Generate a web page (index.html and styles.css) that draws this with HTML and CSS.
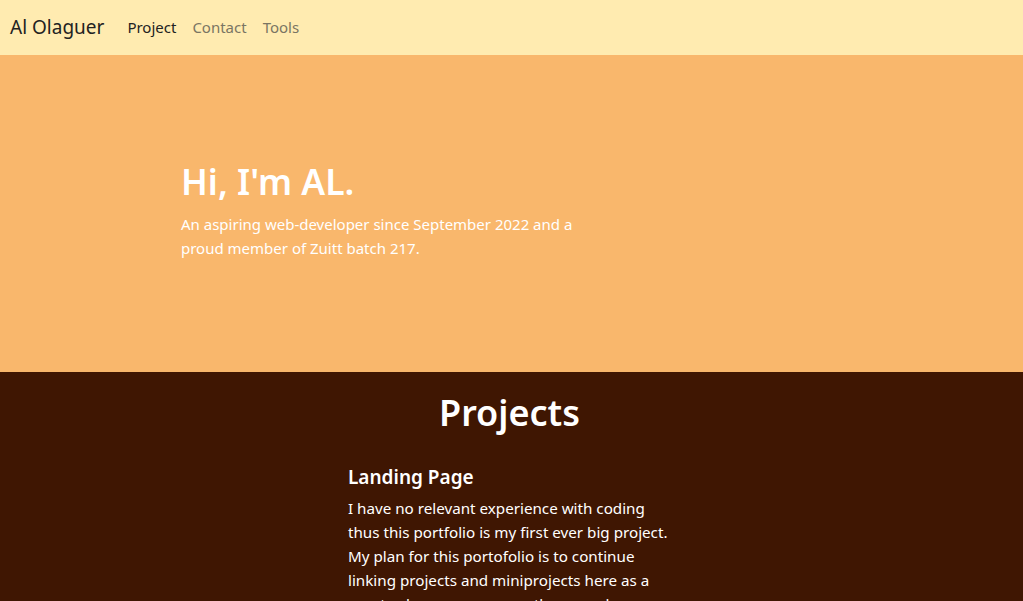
FILE: index.html
```html
<!DOCTYPE html>
<html lang="en">
<head>
<meta charset="utf-8">
<title>Al Olaguer</title>
<link rel="stylesheet" href="styles.css">
</head>
<body>
<nav class="navbar">
  <a class="brand" href="#">Al Olaguer</a>
  <ul class="nav-links">
    <li><a class="nav-link active" href="#">Project</a></li>
    <li><a class="nav-link" href="#">Contact</a></li>
    <li><a class="nav-link" href="#">Tools</a></li>
  </ul>
</nav>
<header class="hero">
  <div class="hero-text">
    <h1 class="hero-title">Hi, I'm AL.</h1>
    <p class="hero-sub">An aspiring web-developer since September 2022 and a proud member of Zuitt batch 217.</p>
  </div>
</header>
<section class="projects">
  <h1 class="projects-title">Projects</h1>
  <div class="project">
    <h5 class="project-title">Landing Page</h5>
    <p class="project-desc">I have no relevant experience with coding thus this portfolio is my first ever big project. My plan for this portofolio is to continue linking projects and miniprojects here as a way to showcase my growth as a web-developer.</p>
  </div>
</section>
</body>
</html>
```
FILE: styles.css
```css
* { box-sizing: border-box; }
html, body { margin: 0; padding: 0; }
body {
  font-family: "Noto Sans", "Open Sans", sans-serif;
  font-size: 16px;
  line-height: 1.5;
  color: #212529;
  overflow: hidden;
}
.navbar {
  height: 55px;
  background: #ffebb0;
  display: flex;
  align-items: center;
  padding: 0 10px;
}
.brand {
  font-size: 19px;
  color: #222;
  text-decoration: none;
  margin-right: 16px;
}
.nav-links {
  list-style: none;
  display: flex;
  margin: 0 0 0 -1px;
  padding: 0;
}
.nav-link {
  display: block;
  padding: 8px;
  font-size: 15px;
  color: #7a7563;
  text-decoration: none;
}
.nav-link.active { color: #222; }
.hero {
  height: 317px;
  background: #f9b76c;
  padding: 105px 0 0 181px;
}
.hero-text { width: 410px; }
.hero-title {
  margin: 0 0 9px;
  font-size: 35.5px;
  font-weight: 600;
  line-height: 1.2;
  color: #fff;
}
.hero-sub {
  margin: 0;
  font-size: 15px;
  line-height: 24px;
  color: #fff;
}
.projects {
  background: #3f1602;
  color: #fff;
  padding: 19px 0 40px;
  min-height: 300px;
}
.projects-title {
  margin: 0 0 32px;
  text-align: center;
  font-size: 36px;
  font-weight: 600;
  line-height: 1.2;
  padding-right: 4px;
}
.project {
  width: 326px;
  margin-left: 348px;
}
.project-title {
  margin: 0 0 7px;
  font-size: 19px;
  font-weight: 600;
  line-height: 1.2;
}
.project-desc {
  margin: 0;
  font-size: 15.2px;
  line-height: 24px;
}
```
